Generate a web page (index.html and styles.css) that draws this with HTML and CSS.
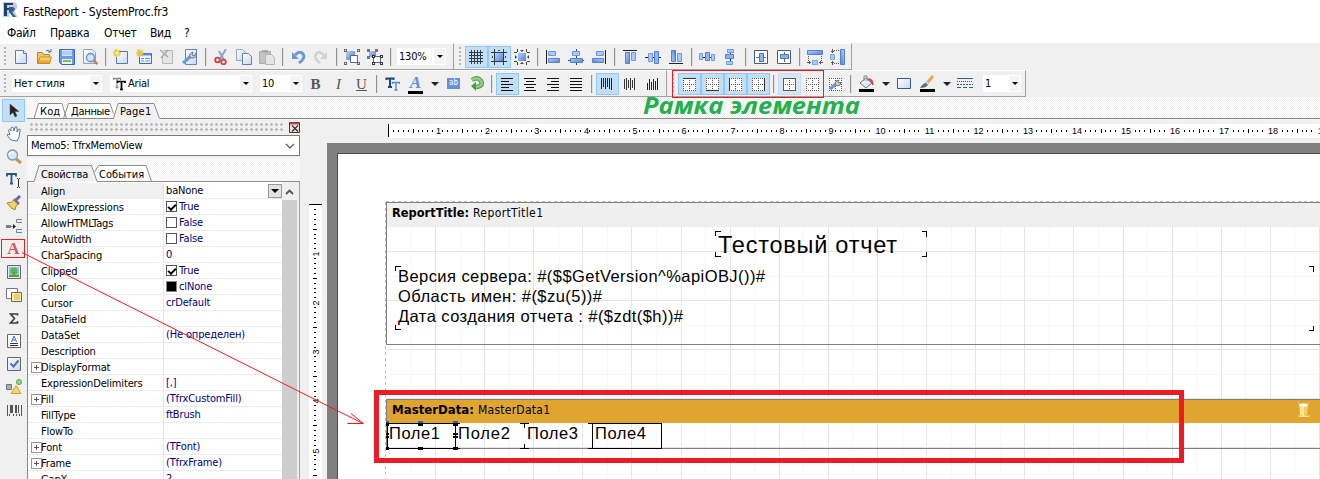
FILE: index.html
```html
<!DOCTYPE html>
<html lang="ru">
<head>
<meta charset="utf-8">
<title>FastReport - SystemProc.fr3</title>
<link rel="stylesheet" href="styles.css">
</head>
<body>
<svg class="defs" width="0" height="0">
<defs>
<linearGradient id="blue" x1="0" y1="0" x2="1" y2="1"><stop offset="0" stop-color="#b4d0ff"/><stop offset="1" stop-color="#5580d0"/></linearGradient>
<linearGradient id="paper" x1="0" y1="0" x2="1" y2="1"><stop offset="0" stop-color="#fff"/><stop offset="1" stop-color="#c6d8f2"/></linearGradient>
<linearGradient id="gold" x1="0" y1="0" x2="0" y2="1"><stop offset="0" stop-color="#ffe08a"/><stop offset="1" stop-color="#e09a18"/></linearGradient>
<symbol id="new" viewBox="0 0 16 16"><path d="M2.500 1.500h8l3 3v10h-11z" fill="url(#paper)" stroke="#5f7aa8"/><path d="M10.500 1.500v3h3" fill="#fff" stroke="#5f7aa8"/></symbol>
<symbol id="open" viewBox="0 0 16 16"><path d="M1.500 14.500v-11h5l1 2h6v9z" fill="#f3c766" stroke="#b5852c"/><path d="M4 8h11.500l-2 6.500H1.500z" fill="url(#gold)" stroke="#c98a1c"/><path d="M10 2q3-2 4 1m-2 0h3V0" fill="none" stroke="#4d6a98"/></symbol>
<symbol id="save" viewBox="0 0 16 16"><path d="M.5 .5h15v15h-13l-2-2z" fill="#6c9ae8" stroke="#3d68b4"/><path d="M3 1h10v6H3z" fill="#dbe8ff"/><path d="M3 3h10M3 5h10" stroke="#8fb0e8"/><path d="M3 10h10v5H3z" fill="#edf5ec"/><path d="M4 12h8" stroke="#7ac060" stroke-width="2"/></symbol>
<symbol id="preview" viewBox="0 0 16 16"><path d="M1.500 .5h9l3 3v11h-12z" fill="url(#paper)" stroke="#8ca4cb"/><circle cx="8.500" cy="8.500" r="4" fill="#cfe7fb" stroke="#6f8db5" stroke-width="1.300"/><path d="M11.500 11.500l4 3.500" stroke="#b98c4e" stroke-width="2.400"/></symbol>
<symbol id="newpage" viewBox="0 0 16 16"><path d="M3.500 2.500h11v12h-11z" fill="url(#paper)" stroke="#5b78aa"/><path d="M3.500 0v8M0 4h8M1 1l6 6M7 1L1 7" stroke="#e8c53c" stroke-width="1.500"/><circle cx="4" cy="4" r="1.500" fill="#fff6b0"/></symbol>
<symbol id="newform" viewBox="0 0 16 16"><path d="M3.500 4.500h12v10h-12z" fill="#edf4ff" stroke="#3e68ae"/><path d="M4 5.500h11" stroke="#5c8ee0" stroke-width="2"/><path d="M5 9.500h3m1 0h5M5 12h3m1 0h5" stroke="#6d92cf"/><path d="M3.500 0v8M0 4h8M1 1l6 6M7 1L1 7" stroke="#e8c53c" stroke-width="1.500"/></symbol>
<symbol id="delpage" viewBox="0 0 16 16"><path d="M4.500 1.500h9v13h-10v-8" fill="#e4e4e4" stroke="#b8b8b8"/><path d="M1 1l8 7M9 1L2 9" stroke="#aaa" stroke-width="1.500"/></symbol>
<symbol id="wrench" viewBox="0 0 16 16"><path d="M3.500 .5h11v15h-11z" fill="url(#paper)" stroke="#6784b5"/><path d="M1 14l8-7" stroke="#6b98df" stroke-width="3"/><path d="M8 8q-1-4 3-5l-1 3 2 1 2-3q1 5-4 5z" fill="#d4d8df" stroke="#687587"/></symbol>
<symbol id="cut" viewBox="0 0 16 16"><path d="M13 0L7 10M6 2l5 9" stroke="#8aa6cf" stroke-width="2"/><circle cx="4.500" cy="11" r="2.300" fill="none" stroke="#d3423a" stroke-width="1.800"/><circle cx="10.500" cy="13" r="2.300" fill="none" stroke="#d3423a" stroke-width="1.800"/></symbol>
<symbol id="copy" viewBox="0 0 16 16"><path d="M.5 .5h6l3 3v8h-9z" fill="url(#paper)" stroke="#91a9d0"/><path d="M6.500 4.500h6l3 3v8h-9z" fill="url(#paper)" stroke="#6380b2"/></symbol>
<symbol id="paste" viewBox="0 0 16 16"><path d="M.5 2.500h11v12H.5z" fill="#c4c4c4" stroke="#aaa"/><path d="M3 1h6v3H3z" fill="#aaa"/><path d="M6.500 5.500h6l3 3v7h-9z" fill="#e5e5e5" stroke="#b5b5b5"/></symbol>
<symbol id="undo" viewBox="0 0 16 16"><path d="M5 6q5-5 8-1t-4 9" fill="none" stroke="#6c98dc" stroke-width="3"/><path d="M2 3v7h7z" fill="#6c98dc"/></symbol>
<symbol id="redo" viewBox="0 0 16 16"><path d="M11 6Q6 1 3 5t4 9" fill="none" stroke="#d2d2d2" stroke-width="2.500"/><path d="M14 3v7H7z" fill="#d2d2d2"/></symbol>
<symbol id="group" viewBox="0 0 16 16"><path d="M2 2h9v9H2z" fill="url(#blue)"/><path d="M6.500 6.500h7v7h-7z" fill="#fff" stroke="#53688f"/><path d="M0 1.500h3M13 1.500h3M0 14.500h3M13 14.500h3" stroke="#666" stroke-width="3"/><path d="M1 1.500h1M14 1.500h1M1 14.500h1M14 14.500h1" stroke="#fff"/></symbol>
<symbol id="ungroup" viewBox="0 0 16 16"><path d="M2 2h7v6H2z" fill="url(#blue)"/><path d="M6.500 7.500h7v6h-7z" fill="#fff" stroke="#53688f"/><path d="M0 1.500h3M8 1.500h3M0 8.500h3" stroke="#777" stroke-width="3"/><path d="M5 7.500h3M13 7.500h3M5 14.500h3M13 14.500h3" stroke="#333" stroke-width="3"/><path d="M6 7.500h1M14 7.500h1M6 14.500h1M14 14.500h1" stroke="#fff"/></symbol>
<symbol id="grid" viewBox="0 0 16 16"><path d="M3.500 1v14M6.500 1v14M9.500 1v14M12.500 1v14M1 3.500h14M1 6.500h14M1 9.500h14M1 12.500h14" stroke="#303a48"/></symbol>
<symbol id="snap" viewBox="0 0 16 16"><path d="M4 4h8v8H4z" fill="url(#blue)"/><path d="M3.500 0v16M12.500 0v16M0 3.500h16M0 12.500h16" stroke="#303a48"/><path d="M7 1.500h2M1.500 7v2M14.500 7v2" stroke="#444"/></symbol>
<symbol id="fit" viewBox="0 0 16 16"><path d="M4 4h8v8H4z" fill="url(#blue)"/><path d="M0 3.500h3M13 3.500h3M0 12.500h3M13 12.500h3M3.500 0v3M12.500 0v3M3.500 13v3M12.500 13v3" stroke="#444"/><path d="M6 1h4L8 3zM6 15h4l-2-2zM1 6v4l2-2zM15 6v4l-2-2z" fill="#444"/></symbol>
<symbol id="al" viewBox="0 0 16 16"><path d="M1.500 1v14" stroke="#222"/><path d="M3.500 2.500h7v4h-7z" fill="#a9caff" stroke="#6d97df"/><path d="M3.500 9.500h11v4h-11z" fill="url(#blue)" stroke="#5580d0"/></symbol>
<symbol id="ac" viewBox="0 0 16 16"><path d="M8.500 0v16M0 11.500h16" stroke="#444"/><path d="M4.500 2.500h7v4h-7z" fill="#a9caff" stroke="#6d97df"/><path d="M2.500 9.500h12v4h-12z" fill="url(#blue)" stroke="#5580d0"/></symbol>
<symbol id="col" viewBox="0 0 16 16"><path d="M1 1.500h14" stroke="#222"/><path d="M3.500 3.500h4v11h-4z" fill="url(#blue)" stroke="#5580d0"/><path d="M9.500 3.500h4v8h-4z" fill="#a9caff" stroke="#6d97df"/></symbol>
<symbol id="mid" viewBox="0 0 16 16"><path d="M0 8.500h16" stroke="#222"/><path d="M3.500 4.500h4v8h-4z" fill="#a9caff" stroke="#6d97df"/><path d="M9.500 2.500h4v12h-4z" fill="#8db4f8" stroke="#5580d0"/></symbol>
<symbol id="dist" viewBox="0 0 16 16"><path d="M0 8.500h16" stroke="#222"/><path d="M.5 4.500h3v6h-3zM12.500 5.500h3v6h-3z" fill="#a9caff" stroke="#7099df"/><path d="M6.500 3.500h4v8h-4z" fill="#8db4f8" stroke="#5580d0"/></symbol>
<symbol id="boxc" viewBox="0 0 16 16"><path d="M1.500 1.500h13v13h-13z" fill="#fff" stroke="#4b5970"/><path d="M3 8.500h10" stroke="#666"/><path d="M6.500 4.500h4v8h-4z" fill="#8db4f8" stroke="#4876c4"/></symbol>
<symbol id="samew" viewBox="0 0 16 16"><path d="M.5 1.500h15v4H.5z" fill="url(#blue)" stroke="#5580d0"/><path d="M1.500 7v5M14.500 7v5" stroke="#555" stroke-dasharray="1 1"/><path d="M0 13.500h4M12 13.500h4M2.500 12v3M13.500 12v3" stroke="#555"/><path d="M5.500 11.500h5v4h-5z" fill="#a9caff" stroke="#7ba5e8"/></symbol>
<symbol id="tl" viewBox="0 0 16 16"><path d="M2 2.500h12M2 5.500h8M2 8.500h12M2 11.500h8M2 14.500h12" stroke="#111"/></symbol>
<symbol id="tc" viewBox="0 0 16 16"><path d="M2 2.500h12M4 5.500h8M2 8.500h12M4 11.500h8M2 14.500h12" stroke="#111"/></symbol>
<symbol id="tr" viewBox="0 0 16 16"><path d="M2 2.500h12M6 5.500h8M2 8.500h12M6 11.500h8M2 14.500h12" stroke="#111"/></symbol>
<symbol id="tj" viewBox="0 0 16 16"><path d="M2 2.500h12M2 5.500h12M2 8.500h12M2 11.500h12M2 14.500h12" stroke="#111"/></symbol>
<symbol id="vt" viewBox="0 0 16 16"><path d="M2.500 2v11M4.500 2v9M6.500 2v11M8.500 2v9M10.500 2v11M12.500 2v12" stroke="#222"/></symbol>
<symbol id="vm" viewBox="0 0 16 16"><path d="M2.500 3v10M4.500 2v12M6.500 4v8M8.500 2v12M10.500 4v8M12.500 2v12" stroke="#333"/></symbol>
<symbol id="vb" viewBox="0 0 16 16"><path d="M2.500 7v7M4.500 3v11M6.500 6v8M8.500 3v11M10.500 5v9M12.500 2v12" stroke="#222"/></symbol>
<symbol id="dots" viewBox="0 0 16 16"><path d="M2 2h13v13H2z" fill="#fff"/><path d="M2 2.500h13M2 8.500h13M2 14.500h13M2.500 2v13M8.500 2v13M14.500 2v13" stroke="#555" stroke-dasharray="1 1"/></symbol>
<symbol id="turn" viewBox="0 0 16 16"><path d="M4 4q6-4 9 1t-5 6" fill="none" stroke="#4d9b4a" stroke-width="4.500"/><path d="M3 10l5-4v9z" fill="#4d9b4a"/><path d="M4 4q6-4 9 1t-5 6" fill="none" stroke="#8fd084" stroke-width="2.500"/></symbol>
<symbol id="bucket" viewBox="0 0 16 16"><path d="M2 8l6-5 6 5-6 5z" fill="url(#paper)" stroke="#5f7590"/><path d="M6 6V1h3v5" fill="none" stroke="#75879d"/><path d="M10 4q5-1 5 6-1-4-5-6z" fill="#d83a2c" stroke="#d83a2c"/></symbol>
<symbol id="brush" viewBox="0 0 16 16"><path d="M14 1L8 8" stroke="#e0ab4c" stroke-width="3"/><path d="M9 7L7 9" stroke="#ccd4df" stroke-width="4"/><path d="M7 8q-3 0-6 5 6 0 8-3z" fill="#55708f"/></symbol>
<symbol id="lines" viewBox="0 0 16 16"><path d="M0 2.500h16" stroke="#34589c"/><path d="M0 5.500h16" stroke="#34589c" stroke-dasharray="1 1"/><path d="M0 8.500h16" stroke="#34589c" stroke-dasharray="2 1"/><path d="M0 11.500h16" stroke="#34589c" stroke-dasharray="4 2"/></symbol>
<symbol id="arrow" viewBox="0 0 16 16"><path d="M5 2v11l3-2.500 2 4.500 2-1-2-4.500h4z" transform="translate(-1 -1)" fill="#222" stroke="#555" stroke-width=".5"/></symbol>
<symbol id="hand" viewBox="0 0 16 16"><path d="M5 14L1 9q0-2 3 0L2.500 4q1-2 2.500 1L5 2q1-2 2.500 0L8 5l1-4q2-1 2 1v4l2-3q2 0 1 2l-1 6-2 4z" fill="#fff" stroke="#5876a4"/></symbol>
<symbol id="glass" viewBox="0 0 16 16"><path d="M10 10l5 4" stroke="#c5955b" stroke-width="3"/><circle cx="6.500" cy="6" r="5" fill="#d4eafc" stroke="#8795a9" stroke-width="1.300"/><path d="M3 6q1-3 4-3" fill="none" stroke="#fff" stroke-width="1.500"/></symbol>
<symbol id="textcur" viewBox="0 0 16 16"><path d="M1 4.500V2h9v2.500M5.500 2v10M4 11.500h3" stroke="#285784" fill="none" stroke-width="1.800"/><path d="M12.500 7v8M11 6.500h1M13 6.500h1M11 15.500h1M13 15.500h1" stroke="#333"/></symbol>
<symbol id="clean" viewBox="0 0 16 16"><path d="M14 1l-4 4" stroke="#6c6a94" stroke-width="3"/><path d="M1 8q5 0 8-4l4 4q-4 3-4 7-4-1-8-7z" fill="#f1d165" stroke="#a88434"/><path d="M8 4l5 5" stroke="#737883" stroke-width="2.500"/></symbol>
<symbol id="nodes" viewBox="0 0 16 16"><path d="M5 8.500h4M16 1.500h-5.500v3H16M16 11.500h-5.500v3H16" fill="none" stroke="#708297"/><path d="M0 7h5v3H0z" fill="#708297"/><path d="M7 6l3 2.500L7 11z" fill="#222"/></symbol>
<symbol id="pic" viewBox="0 0 16 16"><path d="M1.500 1.500h13v13h-13z" fill="#dbeeff" stroke="#666"/><path d="M3 3h10v7H3z" fill="#8fbdf0"/><circle cx="8" cy="7" r="3.500" fill="#5db843"/><path d="M3 10.500h10V13H3z" fill="#50a33a"/><path d="M8 8v4" stroke="#a75c26"/></symbol>
<symbol id="sub" viewBox="0 0 16 16"><path d="M.5 1.500h11v10H.5z" fill="#fff" stroke="#777"/><path d="M5.500 5.500h10v9h-10z" fill="#fff0a8" stroke="#666"/><path d="M8 8h6M8 10h6M8 12h6" stroke="#d9aa40"/></symbol>
<symbol id="sigma" viewBox="0 0 16 16"><path d="M11.500 5.500V4h-7l4 4.500-4 4.500h7v-2" fill="none" stroke="#3b3b3b" stroke-width="1.600"/></symbol>
<symbol id="rich" viewBox="0 0 16 16"><path d="M1.500 1.500h13v13h-13z" fill="#fff" stroke="#666"/><path d="M5.500 9L8 3l2.500 6M6.500 7h3" fill="none" stroke="#3570b8"/><path d="M4 10.500h8M4 12.500h8" stroke="#333"/></symbol>
<symbol id="check" viewBox="0 0 16 16"><path d="M1.500 1.500h13v13h-13z" fill="url(#paper)" stroke="#666"/><path d="M4.500 7.500l3 3 5-6" fill="none" stroke="#4e70ae" stroke-width="2"/></symbol>
<symbol id="shapes" viewBox="0 0 16 16"><path d="M.5 5.500h5v5h-5z" fill="#a8adb3" stroke="#73787e"/><circle cx="13" cy="3" r="2.600" fill="#8bd18c" stroke="#5fae62"/><path d="M10 6.500l5 8H5z" fill="#ffd66d" stroke="#d59c29"/></symbol>
<symbol id="bar" viewBox="0 0 16 16"><path d="M1.500 3v11M4.500 3v8M6.500 3v8M9.500 3v8M12.500 3v8M15.500 3v11M3.500 12v2M7.500 12v2M10.500 12v2M13.500 12v2" stroke="#555"/><path d="M5 3v8M10 3v8" stroke="#555" stroke-width="2"/></symbol>
</defs>
</svg>

<header class="title">
<svg width="16" height="16" viewBox="0 0 16 16"><path d="M1 0h11q4 1 3 6-1 2-3 3l4 6h-4l-4-5-1 5H1z" fill="#c0cede"/><path d="M2 1h9v2H5v3h4v2H5v6H2z" fill="#1c436c"/><path d="M7 5h4q3 1 1 4l-2 1 4 5h-3L7 10z" fill="#2f5f90"/></svg>
<span>FastReport - SystemProc.fr3</span>
</header>
<nav class="menu"><span class="m1">Файл</span><span class="m2">Правка</span><span class="m3">Отчет</span><span class="m4">Вид</span><span>?</span></nav>

<div class="dock">
<div class="bar main">
<i class="grip"></i>
<b class="btn"><svg><use href="#new"/></svg></b><b class="btn"><svg><use href="#open"/></svg></b><b class="btn"><svg><use href="#save"/></svg></b><b class="btn"><svg><use href="#preview"/></svg></b><i class="sep"></i>
<b class="btn"><svg><use href="#newpage"/></svg></b><b class="btn"><svg><use href="#newform"/></svg></b><b class="btn"><svg><use href="#delpage"/></svg></b><b class="btn"><svg><use href="#wrench"/></svg></b><i class="sep"></i>
<b class="btn"><svg><use href="#cut"/></svg></b><b class="btn"><svg><use href="#copy"/></svg></b><b class="btn"><svg><use href="#paste"/></svg></b><i class="sep"></i>
<b class="btn"><svg><use href="#undo"/></svg></b><b class="btn"><svg><use href="#redo"/></svg></b><i class="sep"></i>
<b class="btn"><svg><use href="#group"/></svg></b><b class="btn"><svg><use href="#ungroup"/></svg></b><i class="sep"></i>
<span class="combo zoom"><span>130%</span><i class="drop"></i></span>
</div>
<div class="bar align">
<i class="grip"></i>
<b class="btn on"><svg><use href="#grid"/></svg></b><b class="btn on"><svg><use href="#snap"/></svg></b><b class="btn"><svg><use href="#fit"/></svg></b><i class="sep"></i>
<b class="btn"><svg><use href="#al"/></svg></b><b class="btn"><svg><use href="#ac"/></svg></b><b class="btn"><svg class="flipx"><use href="#al"/></svg></b><i class="sep"></i>
<b class="btn"><svg><use href="#col"/></svg></b><b class="btn"><svg><use href="#mid"/></svg></b><b class="btn"><svg class="flipy"><use href="#col"/></svg></b><i class="sep"></i>
<b class="btn"><svg><use href="#dist"/></svg></b><b class="btn"><svg class="turn"><use href="#dist"/></svg></b><i class="sep"></i>
<b class="btn"><svg><use href="#boxc"/></svg></b><b class="btn"><svg class="turn"><use href="#boxc"/></svg></b><i class="sep"></i>
<b class="btn"><svg><use href="#samew"/></svg></b><b class="btn"><svg class="turn2"><use href="#samew"/></svg></b>
</div>
</div>
<div class="dock">
<div class="bar text">
<i class="grip"></i>
<span class="combo style"><span>Нет стиля</span><i class="drop"></i></span>
<span class="combo font"><svg class="tt" width="13" height="14" viewBox="0 0 13 14"><path d="M.5 3V1.500h7V3M4 2v8M2.500 10.500h3" fill="none" stroke="#888" stroke-width="1.300"/><path d="M4.500 6V4.500h7.500V6M8.500 5v8M7 12.500h3" fill="none" stroke="#000" stroke-width="1.700"/></svg><span>Arial</span><i class="drop"></i></span>
<span class="combo size"><span>10</span><i class="drop"></i></span>
<b class="btn glyph bold">B</b><b class="btn glyph ital">I</b><b class="btn glyph und">U</b><i class="sep"></i>
<b class="btn"><svg viewBox="0 0 16 16"><path d="M2.500 4V2.500h7V4M6 3v8M4 11h4" fill="none" stroke="#1e4776" stroke-width="2"/><path d="M8.500 8V6.500h7V8M12 7v7M10.500 14h3" fill="none" stroke="#5b89c8" stroke-width="1.400"/></svg></b>
<b class="btn glyph fcol">A</b><i class="arr"></i>
<b class="btn"><span class="ab">ab</span></b><b class="btn"><svg><use href="#turn"/></svg></b><i class="sep"></i>
<b class="btn on"><svg><use href="#tl"/></svg></b><b class="btn"><svg><use href="#tc"/></svg></b><b class="btn"><svg><use href="#tr"/></svg></b><b class="btn"><svg><use href="#tj"/></svg></b><i class="sep"></i>
<b class="btn on"><svg><use href="#vt"/></svg></b><b class="btn"><svg><use href="#vm"/></svg></b><b class="btn"><svg><use href="#vb"/></svg></b>
</div>
<div class="bar frame">
<i class="grip"></i>
<b class="btn on"><svg viewBox="0 0 16 16"><use href="#dots"/><path d="M2 2.500h13" stroke="#333"/></svg></b><b class="btn on"><svg viewBox="0 0 16 16"><use href="#dots"/><path d="M2 14.500h13" stroke="#333"/></svg></b><b class="btn on"><svg viewBox="0 0 16 16"><use href="#dots"/><path d="M2.500 2v13" stroke="#333"/></svg></b><b class="btn on"><svg viewBox="0 0 16 16"><use href="#dots"/><path d="M14.500 2v13" stroke="#333"/></svg></b><i class="sep"></i>
<b class="btn hot"><svg viewBox="0 0 16 16"><use href="#dots"/><path d="M2.500 2.500h12v12h-12z" fill="none" stroke="#4c5c74"/></svg></b><b class="btn"><svg><use href="#dots"/></svg></b><b class="btn"><svg viewBox="0 0 16 16"><use href="#dots"/><path d="M3 13l6-5" stroke="#6b98df" stroke-width="3.500"/><path d="M8 8q0-4 4-4l-1 2 2 1 1-1q0 4-4 4z" fill="#ccc" stroke="#777"/></svg></b><i class="sep"></i>
<b class="btn ink"><svg><use href="#bucket"/></svg></b><i class="arr"></i>
<b class="btn"><svg viewBox="0 0 16 16"><path d="M1.500 2.500h13v10h-13z" fill="url(#paper)" stroke="#36588f"/></svg></b>
<b class="btn ink"><svg><use href="#brush"/></svg></b><i class="arr"></i>
<b class="btn"><svg><use href="#lines"/></svg></b>
<span class="combo width"><span>1</span><i class="drop"></i></span>
</div>
</div>

<main class="work">
<aside class="tools">
<b class="btn on"><svg><use href="#arrow"/></svg></b><b class="btn"><svg><use href="#hand"/></svg></b><b class="btn"><svg><use href="#glass"/></svg></b><b class="btn"><svg><use href="#textcur"/></svg></b><b class="btn"><svg><use href="#clean"/></svg></b><b class="btn"><svg><use href="#nodes"/></svg></b><b class="btn glyph memo">A</b><b class="btn"><svg><use href="#pic"/></svg></b><b class="btn"><svg><use href="#sub"/></svg></b><b class="btn"><svg><use href="#sigma"/></svg></b><b class="btn"><svg><use href="#rich"/></svg></b><b class="btn"><svg><use href="#check"/></svg></b><b class="btn"><svg><use href="#shapes"/></svg></b><b class="btn"><svg><use href="#bar"/></svg></b>
</aside>
<div class="right">
<svg class="tabs" width="1293" height="22" viewBox="27 97 1293 22">
<path d="M34 118.500l4.500-15H62l3 5 3.500-5H110l3.500 5 4.500-5h36l5.500 15z" fill="#fff"/>
<path d="M113.500 118.500l4.500-15h36l5.500 15z" fill="#f0f0f0"/>
<path d="M27 118.500h7l4.500-15H62l4.500 15M63.500 118.500l5-15H110l3.500 10M113.500 118.500l4.500-15h36l5.500 15H1320M27 118.500h87" fill="none" stroke="#8c8c8c"/>
<g class="ui"><text x="40" y="115" textLength="20">Код</text><text x="71" y="115" textLength="39">Данные</text><text x="120" y="115" textLength="31">Page1</text></g>
</svg>
<div class="cols">
<section class="inspector">
<div class="phead"><i class="pgrip"></i><svg width="11" height="11" viewBox="0 0 11 11"><path d="M.5 .5h10v10H.5z" fill="#f2dddd" stroke="#4b3038"/><path d="M1 1.500h9" stroke="#b84d50" stroke-width="2"/><path d="M3 3.500l6 6M9 3.500l-6 6" stroke="#333" stroke-width="1.200"/></svg></div>
<div class="object"><span>Memo5: TfrxMemoView</span><svg width="10" height="6" viewBox="0 0 10 6"><path d="M1 1l4 4 4-4" fill="none" stroke="#555" stroke-width="1.200"/></svg></div>
<svg class="tabs" width="273" height="24" viewBox="27 158 273 24">
<path d="M34 181.500l5-16h54l3 5 3-5h47l5 16z" fill="#fff"/><path d="M34 181.500l5-16h53l6 16z" fill="#f0f0f0"/>
<path d="M27 181.500h7l5-16h52.500l5.500 16h203M94.500 172l4-6.500H146l5.500 16" fill="none" stroke="#8c8c8c"/>
<g class="ui"><text x="41" y="178" textLength="47">Свойства</text><text x="99" y="178" textLength="45">События</text></g>
</svg>
<div class="propbox">
<div class="props">
<div class="p sel"><i></i><span>Align</span><em class="ed">baNone<i class="pick"></i></em></div>
<div class="p"><i></i><span>AllowExpressions</span><em><u class="c y"></u>True</em></div>
<div class="p"><i></i><span>AllowHTMLTags</span><em><u class="c"></u>False</em></div>
<div class="p"><i></i><span>AutoWidth</span><em><u class="c"></u>False</em></div>
<div class="p"><i></i><span>CharSpacing</span><em>0</em></div>
<div class="p"><i></i><span>Clipped</span><em><u class="c y"></u>True</em></div>
<div class="p"><i></i><span>Color</span><em><u class="c k"></u>clNone</em></div>
<div class="p"><i></i><span>Cursor</span><em>crDefault</em></div>
<div class="p"><i></i><span>DataField</span><em></em></div>
<div class="p"><i></i><span>DataSet</span><em>(Не определен)</em></div>
<div class="p"><i></i><span>Description</span><em></em></div>
<div class="p"><i class="x"></i><span>DisplayFormat</span><em></em></div>
<div class="p"><i></i><span>ExpressionDelimiters</span><em>[,]</em></div>
<div class="p"><i class="x"></i><span>Fill</span><em>(TfrxCustomFill)</em></div>
<div class="p"><i></i><span>FillType</span><em>ftBrush</em></div>
<div class="p"><i></i><span>FlowTo</span><em></em></div>
<div class="p"><i class="x"></i><span>Font</span><em>(TFont)</em></div>
<div class="p"><i class="x"></i><span>Frame</span><em>(TfrxFrame)</em></div>
<div class="p"><i></i><span>GapX</span><em>2</em></div>
</div>
<div class="scroll"><svg width="9" height="6" viewBox="0 0 9 6"><path d="M1 5l3.500-3.500L8 5" fill="none" stroke="#555" stroke-width="1.800"/></svg><i></i></div>
</div>
</section>
<svg class="canvas" width="1020" height="360" viewBox="300 119 1020 360">
<g shape-rendering="crispEdges">
<rect x="389" y="124" width="931" height="14" fill="#fff"/><rect x="309" y="205" width="13" height="274" fill="#fff"/>
<rect x="327" y="143" width="993" height="336" fill="#808080"/><rect x="337" y="153" width="983" height="326" fill="#4c4c4c"/><rect x="338" y="154" width="982" height="325" fill="#fff"/>
<path d="M410.500 340H1320" stroke="#f7f7f7" stroke-width="276" stroke-dasharray="1 48.110"/>
<path d="M853 227.500V479" stroke="#f7f7f7" stroke-width="933" stroke-dasharray="1 48.100" stroke-dashoffset=".5"/>
<path d="M435 340.500H1320" stroke="#e5e5e5" stroke-width="277" stroke-dasharray="1 48.110"/>
<path d="M853 251V479" stroke="#e5e5e5" stroke-width="933" stroke-dasharray="1 48"/>
<path d="M385.500 202V479M386 201.500H1320" stroke="#bbb" stroke-dasharray="3 3"/>
<rect x="387" y="203" width="933" height="24" fill="#efefef"/><rect x="387" y="400" width="933" height="23" fill="#dfa52f"/>
<path d="M1320 202.500H386.500V344.500H1320M1320 399.500H386.500V448.500H1320" fill="none" stroke="#808080"/>
<path d="M388.500 124v13M309 204.500h13" stroke="#000"/>
<path d="M393 131H1320" stroke="#000" stroke-width="2" stroke-dasharray="1 3.911"/>
<path d="M315 209V479" stroke="#000" stroke-width="2" stroke-dasharray="1 3.911"/>
<path d="M412 130.500H1320" stroke="#fff" stroke-width="3" stroke-dasharray="3 46.110"/><path d="M413 130.500H1320" stroke="#000" stroke-width="4" stroke-dasharray="1 48.110"/>
<path d="M315 228V479" stroke="#fff" stroke-width="3" stroke-dasharray="3 46.110"/><path d="M315 229V479" stroke="#000" stroke-width="4" stroke-dasharray="1 48.110"/>
<path d="M435 131H853" stroke="#fff" stroke-width="4" stroke-dasharray="7 42.110"/><path d="M874 131H1320" stroke="#fff" stroke-width="4" stroke-dasharray="12 37.110"/>
<path d="M315 250V479" stroke="#fff" stroke-width="4" stroke-dasharray="7 42.110"/>
</g>
<g class="rul"><text x="438.500" y="134">1</text><text x="487.600" y="134">2</text><text x="536.700" y="134">3</text><text x="586.500" y="134">4</text><text x="635" y="134">5</text><text x="684" y="134">6</text><text x="733" y="134">7</text><text x="782" y="134">8</text><text x="831" y="134">9</text><text x="880.500" y="134">10</text><text x="929.500" y="134">11</text><text x="978.500" y="134">12</text><text x="1028" y="134">13</text><text x="1077" y="134">14</text><text x="1126" y="134">15</text><text x="1175" y="134">16</text><text x="1224" y="134">17</text><text x="1273" y="134">18</text><text x="1323" y="134">19</text>
<text transform="translate(318.500 254)rotate(-90)">1</text><text transform="translate(318.500 303)rotate(-90)">2</text><text transform="translate(318.500 352)rotate(-90)">3</text><text transform="translate(318.500 401)rotate(-90)">4</text><text transform="translate(318.500 451)rotate(-90)">5</text></g>
<g class="band"><text x="392" y="217" textLength="77" font-weight="bold" lengthAdjust="spacingAndGlyphs">ReportTitle:</text><text x="473" y="217" textLength="70">ReportTitle1</text><text x="392" y="414" textLength="82" font-weight="bold" lengthAdjust="spacingAndGlyphs">MasterData:</text><text x="478" y="414" textLength="72">MasterData1</text></g>
<g class="memo-text"><text class="big" x="718" y="253" textLength="179">Тестовый отчет</text>
<text x="398" y="282" textLength="367">Версия сервера: #($$GetVersion^%apiOBJ())#</text><text x="398" y="302" textLength="204">Область имен: #($zu(5))#</text><text x="398" y="322" textLength="285">Дата создания отчета : #($zdt($h))#</text>
<text x="389" y="439" textLength="51">Поле1</text><text x="458" y="439" textLength="52">Поле2</text><text x="527" y="439" textLength="51">Поле3</text><text x="595" y="439" textLength="51">Поле4</text></g>
<g fill="none" stroke="#000" shape-rendering="crispEdges"><path d="M715.500 236v-4.500h5M715.500 252v4.500h5M922 231.500h4.500v5M922 256.500h4.500v-5M395.500 271v-4.500h5M395.500 325v4.500h5M1309 266.500h4.500v5M1309 330.500h4.500v-5"/>
<path d="M387.500 423.500h68v25h-68zM592.500 423.500h69v25h-69zM456 423.500h4M456 448.500h4M520 423.500h9M520 448.500h9M524.500 423v5M524.500 444v5M588 423.500h5M588 448.500h5"/></g>
<g fill="#000" shape-rendering="crispEdges"><path d="M386 422h3v4h-3zM418 422h5v4h-5zM453 422h5v4h-5zM386 433h3v2h-3zM386 436h3v2h-3zM453 433h5v2h-5zM453 436h5v2h-5zM386 447h3v3h-3zM418 447h5v3h-5zM453 447h5v3h-5z"/><path d="M387 421h2v2h-2zM418 421h5v2h-5zM453 421h5v2h-5z" fill="#1c62c8"/></g>
<g><path d="M1299 404.500h9l-1 11.500h-7z" fill="#f3cf63"/><path d="M1301 406v9M1303 407v9" stroke="#fff4bd" stroke-width="1.200"/><ellipse cx="1303.500" cy="405" rx="4.500" ry="1.700" fill="#fffbe6"/><path d="M1298 403h1M1308 403h1M1298 416h2M1308 416h2M1300 416.500h8" stroke="#ffe9a0"/></g>
</svg>
</div>
</div>
</main>
<svg class="notes" width="1320" height="479" viewBox="0 0 1320 479"><g fill="none" stroke="#ed1c24"><path d="M376.500 392.500h805v68h-805z" stroke-width="5" shape-rendering="crispEdges"/><path d="M1.500 239.500h23v18h-23zM672.500 70.500h151v27h-151z" shape-rendering="crispEdges"/><path d="M22 252.500L363 423.500M351 413.500l12.500 10h-16"/></g><text x="643" y="114" textLength="217" lengthAdjust="spacingAndGlyphs">Рамка элемента</text></svg>
</body>
</html>
```

FILE: styles.css
```css
* { box-sizing: border-box; }
body { margin: 0; width: 1320px; height: 479px; overflow: hidden; background: #f0f0f0; color: #000; font: 11px/16px "DejaVu Sans Condensed", "DejaVu Sans", sans-serif; }
.defs { position: absolute; }
svg { display: block; flex: none; }
i, em { font-style: normal; }
u { text-decoration: none; }

.title { display: flex; align-items: center; gap: 5px; height: 23px; padding-left: 2px; background: #fff; font-size: 12px; letter-spacing: -.17px; }
.title svg { margin-top: -3px; }
.menu { display: flex; height: 20px; padding: 2px 0 0 7px; background: #fff; font-size: 12px; letter-spacing: -.3px; }
.m1 { width: 43px; } .m2 { width: 54px; } .m3 { width: 46px; } .m4 { width: 34px; }

.dock { display: flex; height: 27px; }
.bar { display: flex; align-items: center; height: 27px; border-right: 1px solid #a0a0a0; border-bottom: 1px solid #a0a0a0; border-top: 1px solid #fff; }
.main { width: 454px; }
.align { width: 398px; }
.text { width: 667px; }
.frame { width: 359px; }
.grip { flex: none; width: 2px; height: 20px; margin: 0 4px; background: repeating-linear-gradient(#b4b4b4 0 2px, transparent 2px 4px); }
.align .grip, .frame .grip { margin: 0 4px 0 5px; }
.btn { display: flex; flex: none; align-items: center; justify-content: center; width: 23px; height: 22px; font-weight: normal; }
.btn svg { width: 16px; height: 16px; }
.dock .btn svg { margin-right: 1px; }
.on { background: #c2dff5; border: 1px solid #90c8f6; }
.hot { background: #d8e6f1; border: 1px solid #c0def5; }
.sep { flex: none; width: 2px; height: 18px; margin: 0 3px; background: #909090; border-right: 1px solid #e0e0e0; }
.flipx { transform: scaleX(-1); }
.flipy { transform: scaleY(-1); }
.turn { transform: rotate(-90deg); }
.turn2 { transform: rotate(90deg); }

.combo { display: flex; flex: none; align-items: center; height: 17px; background: #fff; }
.combo span { flex: 1; padding: 1px 0 0 2px; letter-spacing: -.2px; }
.drop { width: 11px; height: 15px; margin-right: 1px; background: #f4f4f4; display: flex; align-items: center; justify-content: center; }
.drop::after { content: ""; border: 3px solid transparent; border-top-color: #000; border-bottom: 0; }
.zoom { width: 49px; margin-left: 2px; }
.style { width: 90px; margin: 0 8px 0 2px; }
.font { width: 142px; margin-right: 8px; padding-left: 3px; }
.size { width: 42px; margin-right: 2px; }
.width { width: 38px; margin-left: 6px; }
.glyph { font-family: "Liberation Serif", serif; font-size: 15px; color: #555; }
.bold { font-weight: bold; }
.ital { font-style: italic; }
.und { text-decoration: underline; }
.fcol { height: 18px; margin: 2px 4px 0 4px; width: 15px; border-bottom: 3px solid #000; color: #5d8ed8; font-weight: bold; font-style: italic; font-size: 17px; }
.arr { width: 15px; flex: none; display: flex; justify-content: center; }
.arr::after { content: ""; border: 4px solid transparent; border-top-color: #222; border-bottom: 0; }
.ab { background: #6790d8; color: #fff; width: 13px; height: 11px; font-size: 8px; line-height: 10px; text-align: center; }
.ink { flex-direction: column; }
.ink svg { height: 16px; margin-bottom: -2px; }
.ink::after { content: ""; width: 15px; height: 3px; background: #000; }

.work { display: flex; height: 382px; }
.tools { width: 27px; padding: 2px 0 0 2px; }
.tools .btn { height: 23px; }
.memo { color: #d25a5a; font-weight: bold; font-size: 17px; }
.right { width: 1293px; }
.tabs { background: repeating-conic-gradient(#fff 0 25%, #f0f0f0 0 50%) 0 0 / 2px 2px; }
.ui { letter-spacing: -.2px; }
.cols { display: flex; }
.inspector { width: 273px; height: 360px; display: flex; flex-direction: column; }
.phead { display: flex; height: 16px; padding: 3px 0 0 3px; gap: 4px; }
.pgrip { width: 255px; height: 8px; margin-top: 1px; background: radial-gradient(circle at 1.500px 1.500px, #b8b8b8 1.200px, transparent 1.500px) 0 0 / 5px 5px; }
.object { display: flex; align-items: center; justify-content: space-between; height: 21px; margin-bottom: 2px; padding: 0 4px 0 3px; background: #fff; border: 1px solid #7a7a7a; letter-spacing: -.25px; }
.propbox { display: flex; height: 297px; background: #fff; border-left: 1px solid #8c8c8c; border-right: 1px solid #a0a0a0; overflow: hidden; }
.props { width: 254px; padding-top: 1px; letter-spacing: -.15px; }
.p { display: flex; height: 16px; border-bottom: 1px solid #ececec; line-height: 17px; }
.p > i { width: 13px; padding: 3px 0 0 3px; }
.p > span { width: 123px; border-right: 1px solid #e4e4e4; white-space: nowrap; }
.p em { display: flex; flex: 1; align-items: center; padding-left: 2px; color: #000080; }
.p .ed { color: #000; }
.sel > i, .sel > span { background: #f0f0f0; }
.x::before { content: ""; display: block; width: 9px; height: 9px; border: 1px solid #999; background: linear-gradient(#555, #555) center / 5px 1px no-repeat, linear-gradient(#555, #555) center / 1px 5px no-repeat; }
.c { width: 11px; height: 11px; margin-right: 2px; border: 1px solid #555; line-height: 0; }
.k { background: #000; border-color: #888; }
.y::after { content: ""; display: block; width: 6px; height: 3px; margin: 2px 0 0 1px; border: solid #000; border-width: 0 0 2px 2px; transform: rotate(-45deg); }
.pick { width: 14px; height: 14px; margin-left: auto; background: #e3e3e3; border: 1px solid #999; display: flex; align-items: center; justify-content: center; }
.pick::after { content: ""; border: 4px solid transparent; border-top-color: #000; border-bottom: 0; }
.scroll { flex: 1; background: #f0f0f0; padding: 7px 2px 0 0; }
.scroll svg { margin: 0 auto 5px; }
.scroll i { display: block; height: 290px; background: #cdcdcd; }

.rul { font: 9px "Liberation Sans", Arial, sans-serif; text-anchor: middle; }
.band { font-size: 12px; }
.memo-text { font: 16.500px "Liberation Sans", Arial, sans-serif; }
.big { font-size: 23.500px; }
.notes { position: absolute; left: 0; top: 0; pointer-events: none; }
.notes text { fill: #22b14c; font: italic bold 24px "Open Sans", "Noto Sans", sans-serif; }
```
